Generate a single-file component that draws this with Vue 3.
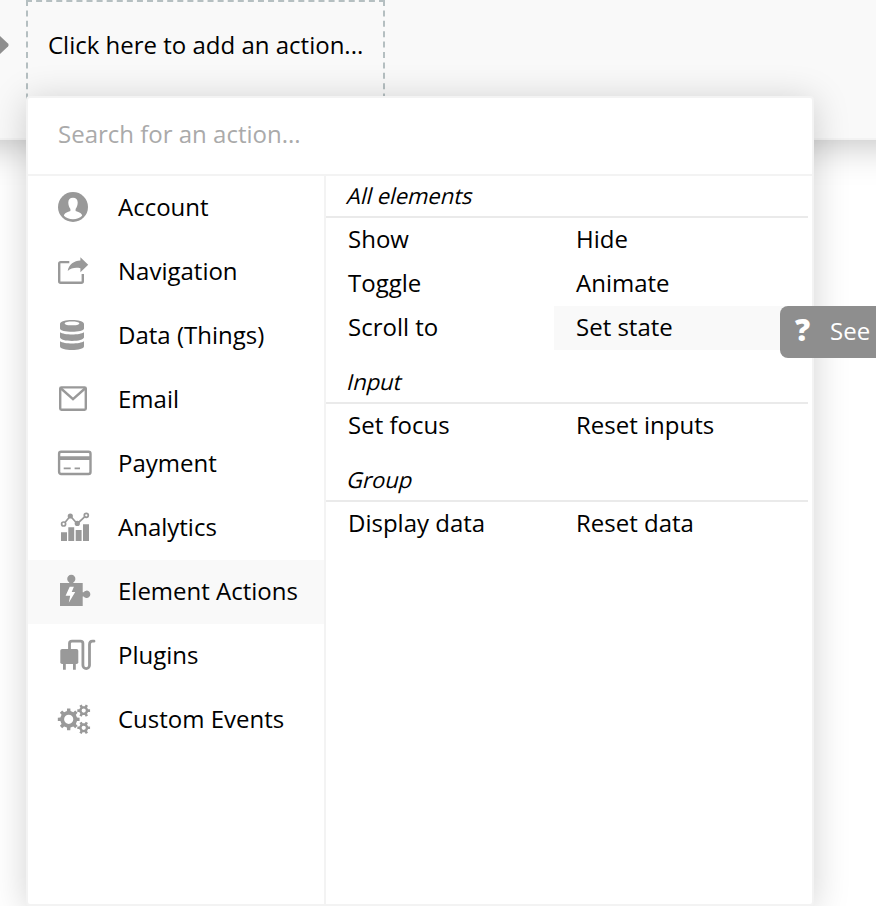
<script setup>
function gear(cx, cy, teeth, outer, inner, hole) {
  const step = (Math.PI * 2) / teeth
  const at = (r, a) => `${(cx + r * Math.cos(a)).toFixed(2)} ${(cy + r * Math.sin(a)).toFixed(2)}`
  const points = []
  for (let i = 0; i < teeth; i++) {
    const a = i * step
    points.push(at(inner, a - step * 0.27), at(outer, a - step * 0.19), at(outer, a + step * 0.19), at(inner, a + step * 0.27))
  }
  return `M${points.join('L')}ZM${cx - hole} ${cy}a${hole} ${hole} 0 1 0 ${hole * 2} 0a${hole} ${hole} 0 1 0 ${-hole * 2} 0Z`
}

const gears = [
  gear(12.7, 19.3, 8, 11, 8.5, 4.6),
  gear(27.7, 10.6, 6, 6.5, 4.6, 2.1),
  gear(27.7, 27.8, 6, 6.5, 4.6, 2.1),
].join('')

const categories = [
  { id: 'account', label: 'Account' },
  { id: 'navigation', label: 'Navigation' },
  { id: 'data', label: 'Data (Things)' },
  { id: 'email', label: 'Email' },
  { id: 'payment', label: 'Payment' },
  { id: 'analytics', label: 'Analytics' },
  { id: 'element', label: 'Element Actions', active: true },
  { id: 'plugins', label: 'Plugins' },
  { id: 'events', label: 'Custom Events' },
]

const groups = [
  { title: 'All elements', actions: ['Show', 'Hide', 'Toggle', 'Animate', 'Scroll to', 'Set state'] },
  { title: 'Input', actions: ['Set focus', 'Reset inputs'] },
  { title: 'Group', actions: ['Display data', 'Reset data'] },
]
</script>

<template>
  <div class="page">
    <header class="workflow">
      <svg class="arrow" viewBox="0 0 10 22"><path d="M0 2 8 9.6Q9.4 11 8 12.4L0 20Z" /></svg>
      <div class="add-action">Click here to add an action...</div>
    </header>

    <section class="menu">
      <div class="search">Search for an action...</div>
      <div class="body">
        <nav class="categories">
          <div v-for="c in categories" :key="c.id" class="category" :class="{ active: c.active }">
            <svg class="icon" viewBox="0 0 40 40">
              <template v-if="c.id === 'account'">
                <circle cx="17" cy="19" r="15" />
                <path class="paper" d="M17 9.8c3 0 4.7 2 4.7 4.8 0 2.9-1 5.1-2.1 6.3v2c4 1.1 6.5 2.6 6.5 4.9-2.2 2.2-5.4 3.4-9.1 3.4s-6.9-1.2-9.1-3.4c0-2.3 2.5-3.8 6.5-4.9v-2c-1.1-1.2-2.1-3.4-2.1-6.3 0-2.8 1.7-4.8 4.7-4.8z" />
              </template>
              <template v-else-if="c.id === 'navigation'">
                <path class="line" d="M13.3 10.1H4.7Q3.2 10.1 3.2 11.6V29.3Q3.2 30.8 4.7 30.8H25.3Q26.8 30.8 26.8 29.3V22" />
                <path d="M11.7 19C13 12.5 18 8.8 24.4 8.6V5.2L32.2 12.7 24.4 20.2V16.2C19.5 15.2 15 16 11.7 19Z" />
              </template>
              <template v-else-if="c.id === 'data'">
                <path fill-rule="evenodd" d="M4 8C4 2.7 28 2.7 28 8V12.5C28 16.8 4 16.8 4 12.5ZM8.7 7.4C8.7 10 23.3 10 23.3 7.4 23.3 4.8 8.7 4.8 8.7 7.4Z" />
                <path d="M4 16.2C8 19.2 24 19.2 28 16.2V21.3C28 26.2 4 26.2 4 21.3ZM4 25.2C8 28.2 24 28.2 28 25.2V30.2C28 35.3 4 35.3 4 30.2Z" />
              </template>
              <template v-else-if="c.id === 'email'">
                <rect class="line" x="4.2" y="7.4" width="25.6" height="22.4" rx="1.2" />
                <path class="line" d="M4.5 8 17 19.2 29.5 8" />
              </template>
              <template v-else-if="c.id === 'payment'">
                <rect class="line" x="3.1" y="7.8" width="31.4" height="22.2" rx="2" />
                <path d="M3 12.3H35V16H3ZM7.7 23.4H14.7V25.3H7.7ZM18.6 23.4H24V25.3H18.6Z" />
              </template>
              <template v-else-if="c.id === 'analytics'">
                <path d="M5 24.2H11V33H5ZM12.3 19.3H18.2V33H12.3ZM19.7 22H25.6V33H19.7ZM27 16.3H33V33H27Z" />
                <path class="line thin" d="M9 14.5 14.3 8 21.3 15.7 28.6 8.8" />
                <circle cx="14.3" cy="8" r="2.6" />
                <circle cx="21.3" cy="15.4" r="2.6" />
                <circle class="line thin" cx="7.6" cy="16" r="2" />
                <circle class="line thin" cx="30.3" cy="7.3" r="2" />
              </template>
              <template v-else-if="c.id === 'element'">
                <path d="M4 11H13.2V10.3A4.1 4.1 0 1 1 17.4 10.3V11H26.7V20.2H27.6A3.7 3.7 0 1 1 27.6 24.4H26.7V34H4Z" />
                <path class="paper" d="M13.7 14.7H17.9L15.7 20H19.2L12.8 30.7 14.2 23.7H9.6Z" />
              </template>
              <template v-else-if="c.id === 'plugins'">
                <rect x="4.3" y="13" width="18" height="15" rx="1.8" />
                <path d="M7 27H9.8V33.8H7ZM17 27H19.8V33.8H17Z" />
                <path class="line cable" d="M13.5 14V7.5Q13.5 5.2 16 5.2H24.5Q26.9 5.2 26.9 7.5V29.3A3.3 3.3 0 0 0 33.5 29.3V8.5Q33.5 5.2 36.5 5.2H38" />
              </template>
              <path v-else fill-rule="evenodd" :d="gears" />
            </svg>
            <span class="label">{{ c.label }}</span>
          </div>
        </nav>
        <div class="groups">
          <section v-for="g in groups" :key="g.title" class="group">
            <h2><span>{{ g.title }}</span></h2>
            <div class="actions">
              <div v-for="a in g.actions" :key="a" class="action" :class="{ hover: a === 'Set state' }">{{ a }}</div>
            </div>
          </section>
        </div>
      </div>
    </section>

    <aside class="tooltip"><b>?</b><span>See</span></aside>
  </div>
</template>

<style>
body {
  margin: 0;
  overflow: hidden;
  background: #fff;
}
</style>

<style scoped>
.page {
  position: relative;
  width: 876px;
  height: 906px;
  overflow: hidden;
  font-family: 'Open Sans', sans-serif;
  font-size: 24px;
  color: #000;
}
.page * {
  box-sizing: border-box;
}
.workflow {
  display: flex;
  align-items: flex-start;
  height: 140px;
  margin: 0 -60px;
  padding: 0 60px;
  background: #f9f9f9;
  border-bottom: 2px solid #f3f3f3;
  box-shadow: 0 4px 36px rgba(0, 0, 0, 0.25);
}
.arrow {
  width: 10px;
  height: 22px;
  margin: 34px 16px 0 0;
  fill: #8e8e8e;
}
.add-action {
  width: 359px;
  height: 110px;
  padding-left: 20px;
  border: 2px dashed #b5bfc1;
  line-height: 86px;
  white-space: nowrap;
}
.menu {
  position: absolute;
  left: 26px;
  top: 96px;
  width: 788px;
  height: 810px;
  display: flex;
  flex-direction: column;
  background: #fff;
  border: 2px solid #f3f3f3;
  border-radius: 4px;
  box-shadow: 0 4px 36px rgba(0, 0, 0, 0.18);
}
.search {
  height: 78px;
  padding-left: 30px;
  border-bottom: 2px solid #f3f3f3;
  line-height: 71px;
  color: #aaa;
}
.body {
  flex: 1;
  display: flex;
}
.categories {
  width: 298px;
  border-right: 2px solid #f3f3f3;
}
.category {
  display: flex;
  align-items: center;
  gap: 22px;
  height: 64px;
  padding-left: 28px;
  white-space: nowrap;
}
.label {
  padding-bottom: 4px;
}
.category.active,
.action.hover {
  background: #f9f9f9;
}
.icon {
  width: 40px;
  height: 40px;
  flex: none;
  fill: #999;
}
.icon .paper {
  fill: #fff;
}
.icon .line {
  fill: none;
  stroke: #999;
  stroke-width: 2.4;
}
.icon .thin {
  stroke-width: 1.7;
}
.icon .cable {
  stroke-width: 2.8;
  stroke-linecap: round;
}
.groups {
  width: 482px;
}
.group + .group {
  margin-top: 12px;
}
h2 {
  height: 42px;
  margin: 0;
  padding-left: 22px;
  border-bottom: 2px solid #eaeaea;
  font-size: 22px;
  font-weight: 400;
  line-height: 38px;
}
h2 span {
  display: inline-block;
  transform: skewX(-14deg);
}
.actions {
  display: grid;
  grid-template-columns: 228px 254px;
}
.action {
  height: 44px;
  padding-left: 22px;
  line-height: 42px;
}
.tooltip {
  position: absolute;
  left: 780px;
  top: 306px;
  width: 110px;
  height: 52px;
  display: flex;
  align-items: center;
  padding: 0 0 4px 15px;
  background: #8e8e8e;
  border-radius: 8px;
  color: #fff;
}
.tooltip b {
  width: 35px;
  font-size: 30px;
  font-weight: 800;
  line-height: 46px;
}
</style>
